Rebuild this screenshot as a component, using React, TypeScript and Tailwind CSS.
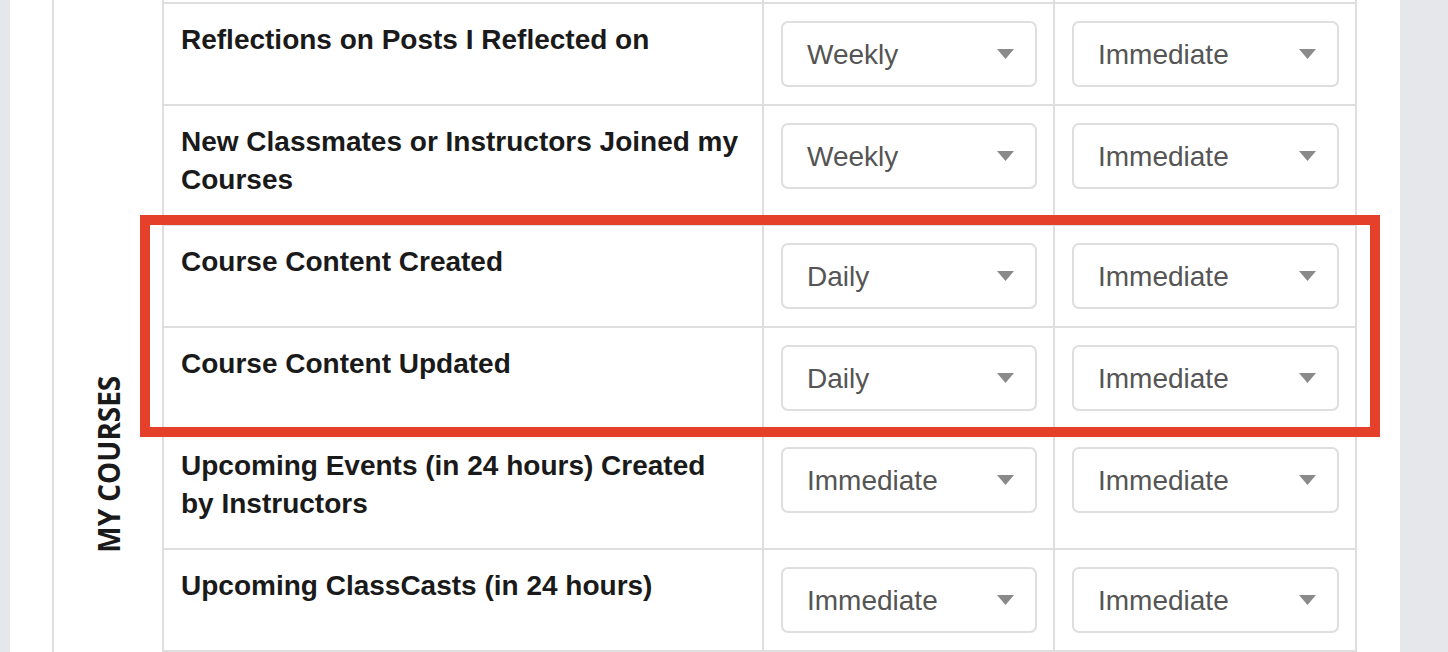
import React from 'react';

interface Setting {
  label: string;
  digest: string;
  push: string;
}

const settings: Setting[] = [
  { label: 'Reflections on Posts I Reflected on', digest: 'Weekly', push: 'Immediate' },
  { label: 'New Classmates or Instructors Joined my Courses', digest: 'Weekly', push: 'Immediate' },
  { label: 'Course Content Created', digest: 'Daily', push: 'Immediate' },
  { label: 'Course Content Updated', digest: 'Daily', push: 'Immediate' },
  { label: 'Upcoming Events (in 24 hours) Created by Instructors', digest: 'Immediate', push: 'Immediate' },
  { label: 'Upcoming ClassCasts (in 24 hours)', digest: 'Immediate', push: 'Immediate' },
];

const Select = ({ value }: { value: string }) => (
  <div className="flex items-center justify-between h-[66px] w-full border-2 border-[#dedede] rounded-[7px] bg-white pl-[24px] pr-[21px]">
    <span className="text-[28px] leading-none text-[#555555] pt-[2px]">{value}</span>
    <svg width="17" height="10" viewBox="0 0 17 10" className="text-[#8a8a8a]">
      <path d="M0 0h17L8.5 10z" fill="currentColor" />
    </svg>
  </div>
);

export default function App() {
  return (
    <div
      className="relative w-[1448px] h-[652px] overflow-hidden bg-[#e6e7eb]"
      style={{ fontFamily: '"Liberation Sans", Arial, sans-serif' }}
    >
      <div className="ml-[10px] w-[1390px] h-full bg-white pl-[42px] flex">
        {/* Group label column */}
        <div className="w-[110px] h-full border-l-2 border-[#dedede] flex justify-center pt-[366px]">
          <span
            className="[writing-mode:vertical-rl] rotate-180 scale-y-[0.9] text-[31px] leading-none font-bold text-[#1a1a1a] whitespace-nowrap h-fit"
            style={{ fontFamily: '"Open Sans", sans-serif' }}
          >
            MY COURSES
          </span>
        </div>

        {/* Rows */}
        <div className="w-[1195px] border-l-2 border-[#dedede] flex flex-col">
          <div className="grid grid-cols-[600px_291px_302px] h-[4px] shrink-0">
            <div className="border-r-2 border-b-2 border-[#dedede]" />
            <div className="border-r-2 border-b-2 border-[#dedede]" />
            <div className="border-r-2 border-b-2 border-[#dedede]" />
          </div>
          {settings.map((s) => (
            <div key={s.label} className="grid grid-cols-[600px_291px_302px] shrink-0">
              <div className="border-r-2 border-b-2 border-[#dedede] pl-[17px] pr-[20px] py-[17px]">
                <p className="text-[28px] leading-[38px] font-bold text-[#1a1a1a] mb-[8px]">{s.label}</p>
              </div>
              <div className="border-r-2 border-b-2 border-[#dedede] pl-[17px] pr-[16px] py-[17px]">
                <Select value={s.digest} />
              </div>
              <div className="border-r-2 border-b-2 border-[#dedede] pl-[17px] pr-[16px] py-[17px]">
                <Select value={s.push} />
              </div>
            </div>
          ))}
        </div>
      </div>

      {/* Highlight annotation */}
      <div className="absolute left-[140px] top-[215px] w-[1240px] h-[222px] border-[10px] border-[#e5412a] pointer-events-none" />
    </div>
  );
}
